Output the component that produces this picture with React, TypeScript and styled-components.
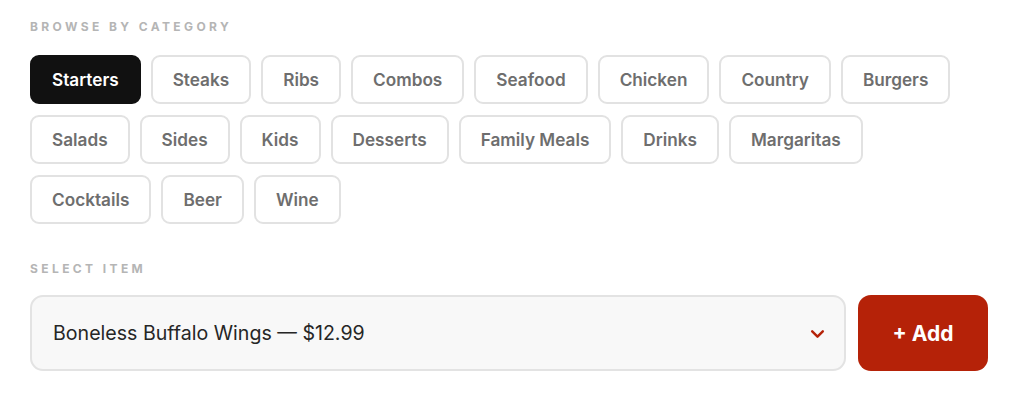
import React, { useState } from "react";
import styled, { createGlobalStyle } from "styled-components";

const Global = createGlobalStyle`
  html, body { margin: 0; padding: 0; background: #ffffff; }
  body { font-family: Inter, "Noto Sans", sans-serif; -webkit-font-smoothing: antialiased; }
`;

const Page = styled.div`
  padding: 19px 30px 0 30px;
  width: 958px;
  display: flex;
  flex-direction: column;
`;

const Label = styled.div<{ $mt?: number }>`
  font-size: 12px;
  font-weight: 700;
  letter-spacing: 3.4px;
  color: #b5b5b5;
  text-transform: uppercase;
  line-height: 16px;
  margin-top: ${(p) => p.$mt ?? 0}px;
`;

const Chips = styled.div`
  display: flex;
  flex-wrap: wrap;
  gap: 11px 10px;
  margin-top: 20px;
  width: 100%;
`;

const Chip = styled.button<{ $active?: boolean }>`
  height: 49px;
  padding: 0 20px;
  border-radius: 9px;
  border: 2px solid ${(p) => (p.$active ? "#111111" : "#e2e2e2")};
  background: ${(p) => (p.$active ? "#111111" : "#ffffff")};
  color: ${(p) => (p.$active ? "#ffffff" : "#6e6e6e")};
  font-family: Inter, "Noto Sans", sans-serif;
  font-size: 17.2px;
  font-weight: 600;
  cursor: pointer;
`;

const Row = styled.div`
  display: flex;
  gap: 12px;
  margin-top: 18px;
`;

const Select = styled.div`
  flex: 1;
  height: 76px;
  box-sizing: border-box;
  border: 2px solid #e3e3e3;
  border-radius: 13px;
  background: #f8f8f8;
  display: flex;
  align-items: center;
  justify-content: space-between;
  padding: 0 18px 0 21px;
  font-size: 19.6px;
  color: #262626;
  font-weight: 400;
`;

const AddButton = styled.button`
  width: 130px;
  height: 76px;
  border: none;
  border-radius: 13px;
  background: #b52208;
  color: #ffffff;
  font-family: Inter, "Noto Sans", sans-serif;
  font-size: 21px;
  font-weight: 700;
  cursor: pointer;
`;

const categories = [
  "Starters", "Steaks", "Ribs", "Combos", "Seafood", "Chicken", "Country", "Burgers",
  "Salads", "Sides", "Kids", "Desserts", "Family Meals", "Drinks", "Margaritas",
  "Cocktails", "Beer", "Wine",
];

export default function App() {
  const [active, setActive] = useState("Starters");
  return (
    <>
      <Global />
      <Page>
        <Label>Browse by category</Label>
        <Chips>
          {categories.map((c) => (
            <Chip key={c} $active={c === active} onClick={() => setActive(c)}>
              {c}
            </Chip>
          ))}
        </Chips>
        <Label $mt={37}>Select item</Label>
        <Row>
          <Select>
            <span>Boneless Buffalo Wings — $12.99</span>
            <svg width="17" height="17" viewBox="0 0 16 16" fill="none">
              <path d="M3 6l5 5 5-5" stroke="#b52208" strokeWidth="2.3" strokeLinecap="round" strokeLinejoin="round" />
            </svg>
          </Select>
          <AddButton>+ Add</AddButton>
        </Row>
      </Page>
    </>
  );
}
